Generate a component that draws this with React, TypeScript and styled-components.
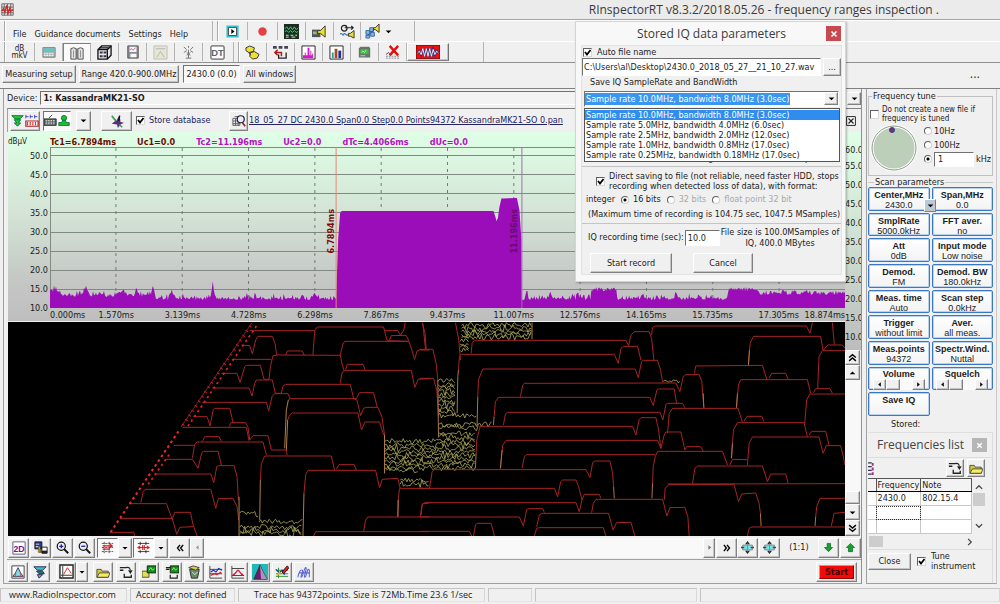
import React from "react";
import styled, { createGlobalStyle, css } from "styled-components";

const UI = `"DejaVu Sans Condensed", "DejaVu Sans", Tahoma, sans-serif`;
const CAPTION = `"Open Sans", "Segoe UI", sans-serif`;
const KEYS = `"Liberation Sans", Arial, sans-serif`;

const Global = createGlobalStyle`
  * { box-sizing: border-box; }
  body { margin: 0; background: #f0f0f0; }
  button, input, select { font: inherit; color: inherit; margin: 0; padding: 0; border-radius: 0; }
  fieldset { margin: 0; min-width: 0; }
  svg { display: block; }
`;

/* ---------- bevels ---------- */
const raised = css`
  border: 1px solid;
  border-color: #fff #808080 #808080 #fff;
  box-shadow: inset -1px -1px 0 #c4c4c4;
`;
const sunken = css`
  border: 1px solid;
  border-color: #707070 #fff #fff #707070;
`;

/* ---------- page ---------- */
const Page = styled.div`
  position: relative;
  display: flex;
  flex-direction: column;
  min-height: 100vh;
  background: #f0f0f0;
  color: #1c1c1c;
  font: 9px/11px ${UI};
  overflow: hidden;
`;
const TitleBar = styled.header`
  display: flex;
  align-items: center;
  justify-content: space-between;
  height: 20px;
  padding: 0 61px 0 1px;
  background: #ebebeb;
  border-bottom: 1px solid #a4a4a4;
`;
const AppTitle = styled.h1`
  margin: 0;
  font: 12px/18px ${CAPTION};
  color: #3a3a3a;
`;
const BarRow = styled.div`
  display: flex;
  align-items: stretch;
  gap: 4px;
  height: 21px;
  padding-left: 4px;
  border-top: 1px solid #fff;
`;
const BarGroup = styled.div<{ $w?: number }>`
  display: flex;
  align-items: center;
  width: ${(p) => (p.$w ? `${p.$w}px` : "auto")};
  border-left: 1px solid #a8a8a8;
  border-right: 1px solid #b4b4b4;
  box-shadow: inset 1px 0 0 #fff;
`;
const MenuItem = styled.button`
  border: 0;
  background: none;
  padding: 5px 0 0;
  margin-left: 8px;
  line-height: 12px;
`;
const ToolCell = styled.button<{ $w?: number; $down?: boolean; $up?: boolean }>`
  display: flex;
  align-items: center;
  justify-content: center;
  gap: 4px;
  width: ${(p) => p.$w ?? 28}px;
  height: 18px;
  background: ${(p) => (p.$down ? "#fafafa" : "none")};
  border: 0;
  border-right: 1px solid #b4b4b4;
  ${(p) => p.$down && "border-top: 1px solid #808080; border-left: 1px solid #808080;"}
  ${(p) => p.$up && raised}
  &:last-child { border-right: ${(p) => (p.$up ? "1px solid #707070" : "0")}; }
`;
const UnitMark = styled.span`
  font-size: 8px;
  line-height: 7px;
  text-align: center;
`;
const TabRow = styled.nav`
  display: flex;
  align-items: flex-start;
  gap: 3px;
  height: 27px;
  padding: 2px 20px 0 2px;
  border-top: 1px solid #909090;
  border-bottom: 1px solid #808080;
`;
const Tab = styled.button<{ $w: number; $down?: boolean }>`
  width: ${(p) => p.$w}px;
  height: 18px;
  margin-left: ${(p) => (p.$down ? 1 : 0)}px;
  background: ${(p) => (p.$down ? "#f8f8f8" : "#ececec")};
  white-space: nowrap;
  ${(p) => (p.$down ? sunken : raised)}
`;
const MoreDots = styled.span`
  margin-left: auto;
  line-height: 18px;
  font-size: 12px;
`;

const Body = styled.div`
  flex: 1;
  display: flex;
  padding-left: 3px;
`;
const Main = styled.main`
  flex: 1;
  min-width: 0;
  display: flex;
  flex-direction: column;
  border-left: 1px solid #a0a0a0;
  border-right: 1px solid #909090;
  border-bottom: 1px solid #a0a0a0;
  padding: 2px 0 0 3px;
`;
const DeviceRow = styled.div`
  display: flex;
  align-items: center;
  gap: 3px;
  height: 14px;
`;
const DeviceField = styled.select`
  flex: 1;
  height: 14px;
  padding-left: 2px;
  appearance: none;
  background: #f3f3f3;
  font-weight: bold;
  ${sunken}
`;
const DropButton = styled.button`
  width: 14px;
  height: 13px;
  display: grid;
  place-items: center;
  background: #f0f0f0;
  ${raised}
`;
const FileRow = styled.div`
  display: flex;
  align-items: center;
  height: 24px;
  margin-top: 3px;
  padding: 1px 5px 1px 2px;
  border-top: 1px solid #808080;
  border-left: 1px solid #a0a0a0;
`;
const Key = styled.button<{ $w?: number; $h?: number; $down?: boolean; $ml?: number }>`
  display: flex;
  align-items: center;
  justify-content: center;
  flex: none;
  gap: 1px;
  width: ${(p) => p.$w ?? 21}px;
  height: ${(p) => p.$h ?? 20}px;
  margin-left: ${(p) => p.$ml ?? 0}px;
  background: ${(p) => (p.$down ? "#fafafa" : "#f0f0f0")};
  ${(p) => (p.$down ? sunken : raised)}
`;
const Check = styled.input.attrs({ type: "checkbox" })`
  appearance: none;
  flex: none;
  width: 9px;
  height: 9px;
  border: 1px solid;
  border-color: #606060 #d8d8d8 #d8d8d8 #606060;
  background: #fff;
  &:checked {
    background: #fff
      url("data:image/svg+xml,%3Csvg xmlns='http://www.w3.org/2000/svg' viewBox='0 0 9 9'%3E%3Cpath d='M2 4l2 2.5L7.500 2' fill='none' stroke='%23000' stroke-width='1.800'/%3E%3C/svg%3E")
      center / 9px 9px no-repeat;
  }
`;
const Radio = styled.input.attrs({ type: "radio" })`
  appearance: none;
  flex: none;
  width: 8px;
  height: 8px;
  border-radius: 50%;
  border: 1px solid;
  border-color: #606060 #d0d0d0 #d0d0d0 #606060;
  background: #fff;
  &:checked { background: radial-gradient(circle, #000 0 1px, #fff 2px); }
`;
const StoreLabel = styled.label`
  display: flex;
  align-items: center;
  gap: 4px;
  margin-left: 4px;
  width: 93px;
  color: #23235e;
  white-space: nowrap;
`;
const FileLink = styled.a`
  flex: 1;
  margin-left: 1px;
  color: #23235e;
  text-decoration: underline;
  white-space: nowrap;
`;

const Graphs = styled.div`
  display: flex;
  margin-left: 1px;
`;
const GraphColumn = styled.div`
  flex: 1;
  min-width: 0;
`;
const Spectrum = styled.section`
  display: flex;
  flex-direction: column;
  height: 189px;
  background: linear-gradient(#dfffe6, #d3e2d5 45%, #c4c6c4 80%, #bebebe);
`;
const Readouts = styled.div`
  display: flex;
  gap: 21px;
  height: 15px;
  line-height: 20px;
  font-weight: bold;
  color: #6a0f00;
`;
const ScaleUnit = styled.span`
  width: 21px;
  font-size: 8px;
  font-weight: normal;
  color: #222;
`;
const Readout = styled.span<{ $second?: boolean }>`
  color: ${(p) => (p.$second ? "#b80fc4" : "#6a0f00")};
`;
const PlotRow = styled.div`
  display: flex;
`;
const LevelScale = styled.div`
  display: flex;
  flex-direction: column;
  width: 42px;
  height: 171px;
  padding-right: 2px;
  & > span {
    flex: 1;
    display: flex;
    align-items: center;
    justify-content: flex-end;
  }
`;
const PlotArea = styled.div`
  position: relative;
  flex: 1;
  min-width: 0;
`;
const TimeScale = styled.div`
  display: flex;
  margin: -9px 0 0 42px;
  line-height: 12px;
`;
const TimeMark = styled.span<{ $edge?: "start" | "end" }>`
  flex: ${(p) => (p.$edge ? 1 : 2)} 1 0;
  min-width: 0;
  display: flex;
  justify-content: ${(p) => (p.$edge === "start" ? "flex-start" : p.$edge === "end" ? "flex-end" : "center")};
  white-space: nowrap;
`;
const CursorTag = styled.span<{ $color: string; $at: string }>`
  position: absolute;
  left: ${(p) => p.$at};
  top: 62px;
  writing-mode: vertical-rl;
  transform: translateX(-100%) rotate(180deg);
  color: ${(p) => p.$color};
  font-weight: bold;
  line-height: 10px;
`;
const Waterfall = styled.section`
  height: 214px;
  margin-top: 1px;
  background: #000;
`;

const SideScale = styled.div`
  display: flex;
  flex-direction: column;
  width: 16px;
`;
const SideLevels = styled.div`
  height: 218px;
  padding-top: 12px;
  overflow: hidden;
  line-height: 19px;
  background: linear-gradient(#dfffe6, #cfe0d2 50%, #bcbcbc);
  & > span { display: block; }
  & > span:first-child { line-height: 13px; }
`;
const Track = styled.div`
  flex: 1;
  display: flex;
  align-items: flex-end;
  background: #f8f8f8;
`;

const Strip = styled.div<{ $line?: boolean }>`
  display: flex;
  align-items: center;
  height: 23px;
  padding-left: 1px;
  ${(p) => p.$line && "border-top: 1px solid #a0a0a0; height: 24px;"}
`;
const StripTrack = styled.div`
  flex: 1;
  height: 20px;
  background: #f9f9f9;
`;
const Ratio = styled.span`
  width: 38px;
  text-align: center;
`;
const StartKey = styled.button`
  margin: 0 4px 0 auto;
  width: 41px;
  height: 20px;
  padding: 2px;
  background: #f0f0f0;
  ${raised}
  & > span {
    display: block;
    background: #f40808;
    border: 1px solid;
    border-color: #ff8080 #900 #900 #ff8080;
    line-height: 12px;
    font-weight: bold;
    color: #400;
  }
`;

/* ---------- right panel ---------- */
const Side = styled.aside`
  width: 131px;
  margin: 0 3px 0 4px;
  padding: 3px 3px 0 1px;
  display: flex;
  flex-direction: column;
  border-left: 1px solid #a0a0a0;
  border-right: 1px solid #c8c8c8;
  border-bottom: 1px solid #a0a0a0;
`;
const TuneBox = styled.fieldset`
  height: 84px;
  padding: 0 0 0 1px;
  border: 1px solid #c0c0c0;
  & > legend { margin-left: 2px; padding: 0 1px; line-height: 9px; }
`;
const TuneNote = styled.label`
  display: flex;
  align-items: center;
  gap: 3px;
  margin-top: 4px;
  font-size: 8px;
  line-height: 9px;
`;
const TuneRow = styled.div`
  display: flex;
  gap: 6px;
  margin-top: 1px;
`;
const StepList = styled.div`
  display: flex;
  flex-direction: column;
  & > label, & > div { display: flex; align-items: center; gap: 2px; height: 14px; }
`;
const StepInput = styled.input`
  width: 40px;
  height: 15px;
  padding-left: 3px;
  background: #fff;
  ${sunken}
`;
const ScanBox = styled.fieldset`
  padding: 0;
  border: 0;
  border-top: 1px solid #c8c8c8;
  margin-top: 1px;
  & > legend { margin-left: 6px; padding: 0 1px; line-height: 10px; }
`;
const ScanGrid = styled.div`
  position: relative;
  display: grid;
  grid-template-columns: 1fr 1fr;
  grid-template-rows: repeat(9, minmax(0, 1fr));
  gap: 2px;
  height: 229px;
  font-family: ${KEYS};
`;
const ScanKey = styled.button`
  display: flex;
  flex-direction: column;
  align-items: center;
  min-width: 0;
  min-height: 0;
  border: 1px solid #3a78c4;
  border-radius: 2px;
  box-shadow: inset 0 0 0 1px #b8d2f0;
  background: linear-gradient(#fff, #f3f3f3);
  line-height: 10px;
  padding: 2px 0 0;
  white-space: nowrap;
`;
const ScanSlider = styled(ScanKey).attrs({ as: "div" })`
  padding: 1px 0 0;
`;
const MiniBar = styled.div`
  display: flex;
  width: 52px;
  height: 11px;
  background: #fafafa;
`;
const MiniKey = styled.button<{ $w?: number; $push?: boolean }>`
  display: grid;
  place-items: center;
  width: ${(p) => p.$w ?? 13}px;
  height: 11px;
  margin-left: ${(p) => (p.$push ? "auto" : "0")};
  background: #f0f0f0;
  ${raised}
`;
const GridDrop = styled.button`
  position: absolute;
  left: 56px;
  top: 12px;
  width: 12px;
  height: 13px;
  display: grid;
  place-items: center;
  background: #b9c8da;
  ${raised}
`;
const Stored = styled.p`
  margin: 3px 0 2px 23px;
  line-height: 11px;
`;
const ListWindow = styled.section`
  flex: 1;
  border-top: 1px solid #e0e0e0;
  border-right: 1px solid #dcdcdc;
`;
const ListTitle = styled.div`
  display: flex;
  align-items: center;
  justify-content: space-between;
  height: 24px;
  padding: 0 5px 0 9px;
  & > h2 { margin: 0; font: 12px/20px ${CAPTION}; color: #444; }
`;
const GreyClose = styled.button`
  display: grid;
  place-items: center;
  width: 15px;
  height: 14px;
  border: 0;
  background: #b6b6b6;
`;
const ListTools = styled.div`
  display: flex;
  align-items: center;
  gap: 3px;
  height: 21px;
  padding: 0 7px 0 0;
  border-top: 1px solid #ddd;
`;
const ListBody = styled.div`
  display: flex;
  height: 56px;
  margin-right: 6px;
`;
const FreqTable = styled.table`
  flex: 1;
  table-layout: fixed;
  border-collapse: collapse;
  background: #fff;
  & th, & td {
    height: 13px;
    padding: 0 1px;
    text-align: left;
    font-weight: normal;
    line-height: 11px;
    border-right: 1px solid #c8c8c8;
    border-bottom: 1px solid #c8c8c8;
    overflow: hidden;
    white-space: nowrap;
  }
  & th { background: #f3f3f3; border-top: 1px solid #555; border-right-color: #555; border-bottom: 1px solid #000; }
  & th:first-child { width: 8px; }
  & th:nth-child(2) { width: 43px; }
  & td.focus { outline: 1px dotted #333; outline-offset: -1px; }
`;
const ListScroll = styled.div`
  display: flex;
  flex-direction: column;
  align-items: center;
  width: 14px;
  padding: 4px 1px 0;
  & > i { display: block; width: 12px; height: 13px; margin-top: 1px; background: #cdcdcd; }
  & > svg:last-child { margin-top: auto; margin-bottom: 3px; }
`;
const ListHScroll = styled.div`
  display: flex;
  align-items: center;
  justify-content: space-between;
  height: 15px;
  padding: 0 17px 0 1px;
  & > i { display: block; width: 14px; height: 11px; background: #cdcdcd; }
`;
const ListFoot = styled.div`
  display: flex;
  align-items: center;
  gap: 6px;
  border-top: 1px solid #ddd;
  padding-top: 1px;
  & > label { display: flex; align-items: center; gap: 5px; line-height: 10px; }
`;

/* ---------- status bar ---------- */
const Status = styled.footer`
  display: flex;
  gap: 3px;
  height: 20px;
  padding: 4px 0 2px;
  font: 9px/12px ${CAPTION};
`;
const StatusCell = styled.span<{ $w?: number; $pad?: number }>`
  ${(p) => (p.$w ? `width: ${p.$w}px;` : "flex: 1;")}
  padding-left: ${(p) => p.$pad ?? 0}px;
  border: 1px solid;
  border-color: #c4c4c4 #d8d8d8 #e4e4e4 #c4c4c4;
  white-space: nowrap;
`;

/* ---------- dialog ---------- */
const Dialog = styled.div`
  position: absolute;
  top: 21px;
  right: 154px;
  width: 271px;
  padding: 0 3px 6px 5px;
  background: #f8f8f8;
  border: 1px solid #d4d4d4;
  box-shadow: 1px 1px 2px rgba(0, 0, 0, 0.25);
`;
const DialogTitle = styled.div`
  display: flex;
  align-items: center;
  justify-content: flex-end;
  gap: 40px;
  height: 23px;
  padding-right: 1px;
  & > h2 { margin: 0; font: 12px/18px ${CAPTION}; color: #3a3a3a; }
`;
const RedClose = styled.button`
  display: grid;
  place-items: center;
  width: 15px;
  height: 15px;
  border: 0;
  background: #c64a50;
`;
const DialogBody = styled.div`
  border: 1px solid #e2e2e2;
  background: #f0f0f0;
`;
const Group = styled.div`
  position: relative;
  border-bottom: 1px solid #c4c4c4;
`;
const AutoName = styled.label`
  display: flex;
  align-items: center;
  gap: 5px;
  height: 12px;
  padding-left: 1px;
`;
const PathRow = styled.div`
  display: flex;
  justify-content: space-between;
  height: 18px;
`;
const PathInput = styled.input`
  width: 239px;
  padding-left: 1px;
  background: #fff;
  ${sunken}
`;
const Caption = styled.label`
  display: block;
  padding: 1px 0 0 8px;
  height: 15px;
`;
const Combo = styled.div`
  display: flex;
  width: 255px;
  height: 16px;
  margin-left: 2px;
  background: #fff;
  ${sunken}
  & > select {
    flex: 1;
    appearance: none;
    border: 0;
    padding: 0 1px;
    color: #fff;
    background: linear-gradient(#3a96f0, #3a96f0) 0 1px / 205px 12px no-repeat;
  }
`;
const Options = styled.ul`
  position: absolute;
  left: 2px;
  top: 62px;
  width: 256px;
  margin: 0;
  padding: 1px 0;
  list-style: none;
  border: 1px solid #555;
  background: #fff;
`;
const Option = styled.li<{ $on?: boolean }>`
  padding-left: 1px;
  line-height: 10px;
  white-space: nowrap;
  ${(p) => p.$on && "background: #2f8df0; color: #fff;"}
`;
const HiddenNote = styled.p`
  margin: 46px 0 0;
  height: 13px;
  line-height: 11px;
  text-align: center;
`;
const Direct = styled.label`
  display: flex;
  align-items: center;
  gap: 4px;
  padding: 4px 0 0 14px;
  line-height: 10px;
  white-space: nowrap;
`;
const Bits = styled.div`
  display: flex;
  align-items: center;
  gap: 6px;
  height: 17px;
  padding-left: 4px;
  & > label { display: flex; align-items: center; gap: 4px; white-space: nowrap; }
`;
const Muted = styled.span`
  color: #a8a8a8;
`;
const Limit = styled.p`
  margin: 0;
  height: 15px;
  padding-left: 6px;
  line-height: 12px;
  white-space: nowrap;
`;
const TimeRow = styled.div`
  display: flex;
  align-items: center;
  gap: 1px;
  height: 27px;
  padding-left: 6px;
  white-space: nowrap;
  & > p { margin: 0; line-height: 11px; text-align: center; }
`;
const TimeInput = styled.input`
  width: 35px;
  height: 16px;
  padding-left: 2px;
  background: #fff;
  ${sunken}
`;
const Actions = styled.div`
  display: flex;
  gap: 21px;
  padding: 2px 0 1px 8px;
`;

/* ---------- icons, 16 x 16 grid ---------- */
const art: Record<string, React.ReactNode> = {
  app: (<><path d="M1 1h14v14H1zM1 5h14M1 9h14M1 12h14M4 1v14M8 1v14M12 1v14" stroke="#555" fill="none" /><path d="M1 10l2-3 2 4 2-8 2 9 2-6 1 4 3-2" stroke="#e02020" strokeWidth="1.6" fill="none" /></>),
  play: (<><path d="M1.500 1.500h13v13h-13z" fill="#f4ffff" stroke="#38c8d0" strokeWidth="2" /><path d="M3 3h10v10H3z" fill="#fff" stroke="#222" /><path d="M6.500 5v6l4-3z" fill="#000" /></>),
  rec: <circle cx="8" cy="8" r="4.500" fill="#e84040" />,
  scope: (<><path d="M0 0h16v16H0z" fill="#1c2c20" /><path d="M1 5l2-2 2 3 2-3 2 3 2-3 2 3 2-2M1 8l2-1 2 2 2-2 2 2 2-2 2 2 2-1" stroke="#4ad070" fill="none" /><path d="M2 12h3M7 12h3M12 12h2M2 14h3M8 14h4" stroke="#d8e8d8" /></>),
  speaker: (<><path d="M0 6h9v8H0z" fill="#505850" /><path d="M1 8h4v3H1z" fill="#9ab0a0" /><path d="M6 7h3l5-5v12l-5-4H6z" fill="#f0e020" stroke="#333" /></>),
  waves: (<><circle cx="4.500" cy="4.500" r="3" fill="none" stroke="#222" strokeWidth="1.300" /><path d="M5 4h9M12 2l2 2-2 2" stroke="#222" fill="none" strokeWidth="1.300" /><path d="M0 11c2-3 3 3 4 0s3 3 5 0" stroke="#3a80b0" strokeWidth="1.300" fill="none" /><path d="M9 10h2l4-3v8l-4-2H9z" fill="#e8e030" stroke="#333" /></>),
  net: (<><path d="M1 7h4v4H1zM6 9h4v4H6zM1 12h4v3H1zM5 4h4v4H5z" fill="#80b8e0" stroke="#3868a0" /><path d="M3 12l9-8" stroke="#2c50a0" fill="none" /><path d="M9 4h2l4-4v9l-4-3H9z" fill="#f0e030" stroke="#333" /></>),
  calc: (<><path d="M1 3h14v11H1z" fill="#b0b8b8" stroke="#707878" /><path d="M2 4h12v4H2z" fill="#58c8c8" /><path d="M2 10h12M2 12h12" stroke="#fff" strokeDasharray="2 1" /></>),
  gate: (<><path d="M1 15V3l3-1 3 1v12zM9 15V3l3-1 3 1v12z" stroke="#444" fill="#e4e4e4" /><path d="M4 5v8M12 5v8" stroke="#888" /><path d="M7 3h2v12H7z" fill="#777" /></>),
  cube: (<><path d="M1 5l4-4h10v10l-4 4H1z" fill="#e8e8f0" stroke="#111" strokeWidth="1.400" /><path d="M1 5h10v10M11 5l4-4M3 3h10" stroke="#111" fill="none" strokeWidth="1.400" /><path d="M3 7h3v2H3zM7 7h3v2H7zM3 11h3v2H3zM7 11h3v2H7z" fill="#334" /></>),
  save: (<><path d="M2 1h12v14H2z" fill="#888c90" stroke="#555" /><path d="M4 2h8v6H4z" fill="#f4f4f4" /><path d="M4 6l2-2 2 2 3-3" stroke="#d040b0" fill="none" /><path d="M5 10h7v4H5z" fill="#f8f8f8" /></>),
  ghost: (<><path d="M1 1h14v14H1z" fill="#e6e6d8" stroke="#c0c0b4" /><path d="M3 4h10M4 13l4-6 4 6" stroke="#b4b4a8" fill="none" /></>),
  mast: (<><path d="M8 5v9M3 2l3 3M13 2l-3 3M3 8l3-2M13 8l-3-2M8 1v2M5 14h6M6 11l4-3M10 11L6 8" stroke="#707070" fill="none" /></>),
  dt: (<><rect x="1" y="1" width="14" height="14" rx="1" fill="#fff" stroke="#333" /><text x="8" y="12" fontSize="10" textAnchor="middle" fontFamily="Liberation Sans, sans-serif" fontWeight="bold" fill="#567">DT</text></>),
  tags: (<><path d="M1 3l4-2 5 2-1 4-5 1-3-2zM6 8l4-1 5 3-2 4-5 1-3-3z" fill="#f0e030" stroke="#333" /><path d="M4 8l2 3" stroke="#333" /></>),
  arrowback: (<><path d="M0 1h4v3H0zM6 1h4v3H6zM12 1h4v3h-4z" fill="#445" /><path d="M2 8h7v4M5 5L2 8l3 3" stroke="#b01818" strokeWidth="1.600" fill="none" /><path d="M6 10v4h8V8" stroke="#222" strokeWidth="1.400" fill="none" /></>),
  spec: (<><path d="M1 1h14v14H1z" fill="#fff" stroke="#222" /><path d="M2 14v-3h2V8h1v3h2V3h2v8h1V6h1v5h1V9h1v5z" fill="#d818c8" /></>),
  bars: (<><path d="M1 1h14v14H1z" fill="#fff" stroke="#222" /><path d="M3 8h2v6H3z" fill="#28a0a0" /><path d="M6 4h3v10H6z" fill="#a05020" /><path d="M10 6h3v8h-3z" fill="#282890" /></>),
  device: (<><path d="M1 3l2-2h11l1 2v11H1z" fill="#6a726a" /><path d="M3 4h10v6H3z" fill="#38c040" /><path d="M3 12h6" stroke="#ddd" /><path d="M4 8l2-2 2 2 2-3" stroke="#c8ffc8" fill="none" /></>),
  cross: (<><path d="M1 12h14M1 14h14" stroke="#888" strokeDasharray="2 1" /><path d="M1 10l3-2 2 2" stroke="#446" fill="none" /><path d="M5 1l9 10M14 1L5 11" stroke="#e01010" strokeWidth="2.600" /></>),
  burst: (<><path d="M0 0h28v16H0z" fill="#ee1010" stroke="#400" /><path d="M2 9l2-2 2 4 2-7 2 9 2-9 2 9 2-9 2 9 2-8 2 6 2-4 2 2" stroke="#303080" strokeWidth="2.500" fill="none" /><path d="M2 9l2-2 2 4 2-7 2 9 2-9 2 9 2-9 2 9 2-8 2 6 2-4 2 2" stroke="#fff" fill="none" /></>),
  plane: (<><path d="M1 3l6 5 4-7 1 8 4 1-4 2-3 4-1-4-6-1 4-3z" fill="#5c2a80" /><path d="M2 2l5 6M10 12l4 3" stroke="#28a040" strokeWidth="1.600" /><path d="M11 2l-1 6" stroke="#111" strokeWidth="1.600" /></>),
  search: (<><path d="M1 5h8v8H1zM3 3h8M1 8h8M1 11h8M4 5v8M7 5v8" stroke="#555" fill="none" /><circle cx="10" cy="6" r="4" fill="#eef" stroke="#223" strokeWidth="1.400" /><path d="M12 10l3 4" stroke="#a02020" strokeWidth="2" /></>),
  d2: (<><path d="M1 1h14v14H1z" fill="#fff" stroke="#557" /><text x="8" y="12" fontSize="10" textAnchor="middle" fontFamily="Liberation Sans, sans-serif" fontWeight="bold" fill="#7a1090">2D</text></>),
  layers: (<><path d="M1 1h8v8H1z" fill="#2838a0" stroke="#111" /><path d="M2 3h4v1H2zM2 6h3v1H2z" fill="#fff" /><path d="M5 6h2v7H5zM7 9h2v4H7z" fill="#e8c820" stroke="#111" strokeWidth="0.500" /><path d="M9 7h6v7H9z" fill="#fff" stroke="#111" /><path d="M9 11h6v3H9z" fill="#222" /></>),
  zin: (<><circle cx="6.500" cy="6.500" r="5" fill="#eef" stroke="#111" strokeWidth="1.500" /><path d="M4 6.500h5M6.500 4v5" stroke="#2020a0" strokeWidth="1.600" /><path d="M10 10l5 5" stroke="#111" strokeWidth="2.400" /></>),
  zout: (<><circle cx="6.500" cy="6.500" r="5" fill="#eef" stroke="#111" strokeWidth="1.500" /><path d="M4 6.500h5" stroke="#2020a0" strokeWidth="1.600" /><path d="M10 10l5 5" stroke="#111" strokeWidth="2.400" /></>),
  marks: (<><path d="M1 3h14M1 8h14M1 13h14M4 1v14M10 1v14" stroke="#444" strokeDasharray="3 1" fill="none" /><path d="M2 6h11M2 10h9M10 3l4 3-4 3" stroke="#d02020" strokeWidth="1.400" fill="none" /></>),
  marks2: (<><path d="M1 3h14M1 13h14M4 1v4M11 1v4M4 11v4M11 11v4" stroke="#222" fill="none" /><path d="M1 8h14M4 6L1 8l3 2M12 6l3 2-3 2M7 5v6M9 5v6" stroke="#d02020" strokeWidth="1.300" fill="none" /></>),
  ll: <path d="M8 3L4 8l4 5M13 3L9 8l4 5" stroke="#000" strokeWidth="2.200" fill="none" />,
  rr: <path d="M3 3l4 5-4 5M8 3l4 5-4 5" stroke="#000" strokeWidth="2.200" fill="none" />,
  l: <path d="M10 4v8L5 8z" fill="#999" />,
  r: <path d="M6 4v8l5-4z" fill="#777" />,
  down: <path d="M3 6h10l-5 5z" fill="#000" />,
  up: <path d="M3 11h10L8 6z" fill="#000" />,
  left: <path d="M11 3v10L5 8z" fill="#000" />,
  right: <path d="M5 3v10l6-5z" fill="#000" />,
  uu: <path d="M2 8l6-5 6 5M2 14l6-5 6 5" stroke="#000" strokeWidth="2.600" fill="none" />,
  dd: <path d="M2 2l6 5 6-5M2 8l6 5 6-5" stroke="#000" strokeWidth="2.600" fill="none" />,
  cup: <path d="M3 11l5-5 5 5" stroke="#444" strokeWidth="2" fill="none" />,
  cdown: <path d="M3 5l5 5 5-5" stroke="#444" strokeWidth="2" fill="none" />,
  cright: <path d="M5 3l5 5-5 5" stroke="#444" strokeWidth="2" fill="none" />,
  fit: (<><path d="M2 5h12v6H2z" fill="#70e4e8" stroke="#688" /><path d="M8 0l3 4H5zM8 16l3-4H5z" fill="#222" /><path d="M8 3v10" stroke="#4aa" strokeWidth="1.200" /><path d="M0 8h4M12 8h4" stroke="#a02020" strokeWidth="1.800" /></>),
  gdown: <path d="M6 2h5v6h3l-6 6-6-6h4z" fill="#18a028" stroke="#063" />,
  gup: <path d="M5 14h6V8h3L8 2 2 8h3z" fill="#18a028" stroke="#063" />,
  peak: (<><path d="M1 1h14v14H1z" fill="#fff" stroke="#333" /><path d="M2 13l3-4 3-6 3 6 3 4z" fill="#80d8e0" stroke="#335" /><path d="M5 9v5M11 9v5" stroke="#d04040" /></>),
  funnel: (<><path d="M1 2h14l-4 4H5z" fill="#40c0c8" stroke="#224" /><path d="M4 7h7l2 3H7z" fill="#207880" stroke="#224" /><path d="M5 11h6l-4 4z" fill="#40c0c8" stroke="#224" /></>),
  graph: (<><path d="M1 1h14v14H1z" fill="#fff" stroke="#222" strokeWidth="1.500" /><path d="M4 2v12M2 12h12" stroke="#333" /><path d="M5 11l4-7 4 6" stroke="#d02020" fill="none" /></>),
  folder: (<><path d="M1 5h5l1 2h7v7H1z" fill="#d8c838" stroke="#444" /><path d="M4 9h12l-2 5H1z" fill="#f4ee60" stroke="#444" /></>),
  export: (<><path d="M1 3h7M1 6h4" stroke="#222" strokeWidth="1.600" fill="none" /><path d="M8 3c4-1 5 1 5 5M11 6l2 3 2-3" stroke="#222" strokeWidth="1.300" fill="none" /><path d="M6 10v4h8v-3" stroke="#222" strokeWidth="1.500" fill="none" /></>),
  folderscr: (<><path d="M0 7h8v7H0z" fill="#e8dc48" stroke="#444" /><path d="M6 1h10v8H6z" fill="#109020" stroke="#111" /><path d="M8 6l2-3 2 3 2-2" stroke="#a8ff60" fill="none" /></>),
  savescr: (<><path d="M1 3h5M1 5h4" stroke="#222" strokeWidth="1.500" /><path d="M6 1h10v8H6z" fill="#109020" stroke="#111" /><path d="M8 6l2-3 2 3 2-2" stroke="#a8ff60" fill="none" /><path d="M6 11v4h8v-4" stroke="#222" strokeWidth="1.400" fill="none" /></>),
  bin: (<><path d="M3 5h11l-2 10H5z" fill="#708868" stroke="#223" /><path d="M2 3l5-2 7 2-4 3z" fill="#d8d040" stroke="#333" /><path d="M6 8l3 3 3-3" stroke="#cfe" fill="none" /></>),
  lines: (<><path d="M1 1v14h14M1 5h14M1 10h14" stroke="#333" fill="none" /><path d="M2 8l3-2 3 2 3-4 4 2" stroke="#2030c0" strokeWidth="1.400" fill="none" /><path d="M2 12l4-2 3 1 5-3" stroke="#d02020" strokeWidth="1.400" fill="none" /></>),
  bell: (<><path d="M1 1v14h14M1 4h14M1 12h14" stroke="#333" fill="none" /><path d="M2 11c4 0 4-5 6-5s2 5 6 5" stroke="#d02040" strokeWidth="1.500" fill="none" /></>),
  mount: (<><path d="M0 0h16v16H0z" fill="#20b8b8" /><path d="M2 15L6 6l2-5 3 7 4 7z" fill="#701878" stroke="#333" /><path d="M8 1l3 7 4 7H9z" fill="#b090b8" /></>),
  pen: (<><path d="M1 6h14M1 10h14M1 13h14M4 3v12" stroke="#228822" fill="none" /><path d="M1 5l4 4 3-3 3 5" stroke="#2030c0" strokeWidth="1.500" fill="none" /><path d="M8 8l6-7 2 2-6 7z" fill="#d82020" stroke="#300" /><path d="M2 12l4-4" stroke="#d8c020" strokeWidth="2" /></>),
  scrib: <path d="M1 14c1-6 3-9 5-8s-3 8-1 8 3-11 5-11-3 11-1 11 2-9 4-9 1 6 1 9M2 9h12" stroke="#5868d0" strokeWidth="1.200" fill="none" />,
  feed: (<><path d="M1 2h14l-4 4H5z" fill="#20c838" stroke="#063" /><path d="M4 7h8l-3 4h3l-4 4-4-4h3z" fill="#20c838" stroke="#063" /></>),
  feed2: (<><path d="M1 3h3M6 3h3M11 3h3M1 1v4M6 1v4M11 1v4" stroke="#3838c0" /><path d="M1 8h14v6H1z" fill="#fff" stroke="#b02020" strokeWidth="1.400" /><path d="M3 9v4M6 9v4M9 9v4M12 9v4" stroke="#d03030" strokeWidth="1.300" /></>),
  keys: (<><path d="M0 6h15v8H0z" fill="#606460" stroke="#222" /><path d="M2 8h11M2 10h11M2 12h11" stroke="#e8e8e8" strokeDasharray="2 1" /><path d="M6 5l4-4" stroke="#222" /></>),
  tower: (<><circle cx="8" cy="4" r="3.500" fill="#18c030" stroke="#063" /><path d="M6 7h4l1 3h4v4H1v-4h4z" fill="#18c030" stroke="#063" /></>),
  boxx: (<><path d="M1 1h14v14H1z" fill="#fff" stroke="#222" strokeWidth="1.600" /><path d="M4 4l8 8M12 4l-8 8" stroke="#222" strokeWidth="2" /></>),
  xwhite: <path d="M4 4l8 8M12 4l-8 8" stroke="#fff" strokeWidth="2.400" />,
  dotsq: (<><path d="M0 2h4M0 6h4M0 10h4M0 14h4" stroke="#335" strokeWidth="1.500" /><path d="M5 2v3M5 7v3M5 12v3" stroke="#a03080" strokeWidth="2" /></>),
};
const Icon = ({ n, s = 14, w }: { n: string; s?: number; w?: number }) => (
  <svg width={w ?? s} height={s} viewBox={w ? "0 0 28 16" : "0 0 16 16"} aria-hidden="true">
    {art[n]}
  </svg>
);

/* ---------- signal drawing ---------- */
const rng = (seed: number) => () => {
  seed = (seed * 1664525 + 1013904223) % 4294967296;
  return seed / 4294967296;
};

const envelope = () => {
  const r = rng(7);
  const bumps = [
    [54, 9, 6], [86, 3, 9], [122, 7, 4], [137, 2, 6], [153, 1, 8], [172, 3, 8], [213, 1, 12], [213, 4, 4],
    [315, 2, 6], [527, 1, 7], [551, 2, 7], [643, 1, 4], [677, 1, 6], [700, 2, 4],
  ];
  let d = "M50 308";
  for (let x = 50; x <= 846; x += 1) {
    if (x >= 336 && x <= 522) {
      if (x === 336)
        d += " L336.500 299 L338.500 240 L340.500 213 L342 211 L494 211 L496 217 L497 221 L498.500 218 L500 207 L502 198.500 L517.500 198 L520 210 L522 240 L522.500 300";
      continue;
    }
    let h = (x < 155 ? 11 : 8) + r() * 3;
    if (r() > 0.72) h += r() * 5;
    for (const [c, w, a] of bumps) if (Math.abs(x - c) <= w) h += a * (1 - Math.abs(x - c) / (w + 1));
    if (x > 591 && x < 618) h = 17 + r() * 4;
    if (x > 728) h = 13 + r() * 5 + (x < 760 ? 3 : 0);
    d += ` L${x} ${(308 - h).toFixed(1)}`;
  }
  return d + " L846 308 Z";
};

const LEVELS = [155, 174, 193, 212, 232, 251, 270, 289, 308];
const TIMES = Array.from({ length: 12 }, (_, i) => 116 + i * 66.4).filter((x) => x < 840);

const SpectrumPlot = () => (
  <svg width="100%" height="161" viewBox="50 147 796 161" preserveAspectRatio="none">
    <g stroke="#7f8a82" strokeWidth="1">
      {LEVELS.map((y) => <path key={y} d={`M50 ${y}.500H846`} />)}
      <path d="M50.500 147V308M50 147.500H846" />
    </g>
    {TIMES.map((x) => <path key={x} d={`M${x} 148V308`} stroke="#707a74" strokeDasharray="3 4" />)}
    <path d={envelope()} fill="#9a0db8" />
    <path d="M336.500 147V308" stroke="#e08a70" />
    <path d="M522.500 147V308" stroke="#a070b0" />
  </svg>
);

const leftTraces = [
  "M750 32H945M940 105L943 60 946 30 953 21 1152 21 1158 45 1163 62 1228 64M1155 32L1195 32 1203 45 1213 30 1217 8M1170 60L1175 47 1220 46 1228 62M1268 8L1277 40 1280 90",
  "M1022 105L1030 72 1035 64 1228 64 1237 90 1245 118 1253 93 1260 90 1290 90",
  "M725 75L750 77 758 102 768 60 775 49 818 49 826 70 831 105 1022 106 1028 135 1033 150M858 105L863 93 908 93 914 106",
  "M696 118H815M808 178L812 140 820 107 831 106M1038 148L1043 133 1090 133 1097 150",
  "M1022 190L1027 160 1033 151 1235 151 1246 202 1256 178 1290 175",
  "M665 160L712 160 721 187 735 140 740 136 782 136 793 178 808 178",
  "M638 204L748 204 757 228 765 190 770 180 818 180 827 220 845 220 850 198 857 193 1052 193 1062 235",
  "M608 247L800 247 807 273 817 230 825 221 865 221 872 236 1070 236 1080 218 1122 218 1133 262",
  "M866 240L872 236M864 300L870 285 878 279 1075 279 1086 330 1096 306 1140 306 1152 345",
  "M1062 236L1072 240 1083 287 1092 265 1100 262 1135 262 1147 290 1155 345",
  "M580 290L622 290 631 318 640 270 645 265 690 265 700 307M548 322H740L748 362M688 320L694 308 738 308 745 322 750 360",
  "M522 376H583M578 415L584 375 592 366 790 366 800 405M608 364L615 350 658 350 665 364M750 360L760 347 805 347 815 390 860 390 862 405",
  "M497 418L578 418 595 445 606 398 612 394 655 394 665 436M468 462L633 462 642 488 651 440 657 437 703 437 712 470 716 540",
  "M782 480L785 430 795 408 995 408 1005 450M1010 448L1018 434 1064 434 1070 450M913 520L918 465 925 451 1128 451 1140 503 1148 478 1195 475 1202 505 1290 505",
  "M423 548L430 515 436 508 633 508 648 565 656 536 700 535 712 560 717 600",
  "M388 551L500 551 517 598 525 577 572 577 580 615 592 648M360 595L517 595 531 643 540 622 580 620M330 637L402 637 405 648",
  "M1195 590L1196 540 1200 505M1262 590L1268 552 1290 549M1092 635L1098 600 1105 591 1290 591M942 648L948 635 1290 635",
].join("");

const rightTraces = [
  "M10 40L18 118M0 118L40 118 50 160 55 210M108 38L118 90 123 150M0 205L42 205 52 240 57 320",
  "M155 130L158 100 165 91 620 91 628 107 635 75 645 65 690 65 697 85 704 150",
  "M117 180L120 140 125 133 585 133 597 160 605 115 613 109 655 109 665 150",
  "M697 75L700 52 708 48 1162 48 1173 70 1180 38M1240 38L1246 104M1212 122L1226 105 1270 105 1278 115",
  "M988 165L993 100 1003 79 1205 79 1212 122 1278 122M1196 235L1200 140 1210 122",
  "M175 260L177 210 190 177 648 177 657 203 667 155 672 151 715 151 724 180 730 216",
  "M303 260L310 225 315 220 770 219 782 245 792 200 800 194 840 194 848 215 854 293",
  "M825 190L830 168 1030 166 1043 208M1050 205L1058 190 1100 190 1107 207",
  "M224 320L228 275 237 262 692 262 702 287 713 240 718 237 765 237 772 280",
  "M952 293L958 225 965 209 1165 209 1175 250M1183 248L1190 236 1233 236 1240 250",
  "M252 345L258 312 265 307 722 307 731 330 740 283 745 280 790 280 797 293",
  "M745 370L750 310 760 295 957 295 970 337M975 333L984 319 1028 319 1034 335M1157 340L1163 270 1172 252 1278 252",
  "M170 430L172 390 182 349 640 349 650 375 660 328 665 323 710 323 718 360 725 415 735 375 740 366 785 366 797 420 803 410 845 410 852 423",
  "M937 445L943 360 955 338 1155 338 1165 380M1170 375L1178 364 1220 364 1230 405",
  "M243 475L250 405 260 391 715 391 725 415M985 465L990 400 1000 381 1200 381 1212 430 1222 407 1265 407 1273 440 1278 465",
  "M308 475L315 440 322 434 708 434M700 520L702 470 708 440 715 424 910 424 925 465M932 465L940 448 985 449",
  "M820 522L827 475 835 468 1030 468 1045 515 1055 492 1100 492 1107 520",
  "M30 535L38 485 45 479 500 479 512 503 520 458 528 453 572 453 580 490 583 530",
  "M0 535L405 535 415 560 424 515 430 510 470 510 478 530 488 570 495 553 540 553 545 565",
  "M735 570L738 535 748 524 945 524 958 575 968 552 1010 549 1020 580 1024 610M745 522L1278 521",
  "M517 608L522 580 530 568 730 568 743 618 752 593 797 592 806 620 810 678M5 615L8 585 15 578 470 578 480 605 488 570",
  "M1190 620L1193 590 1203 565 1278 565M1237 648L1245 610 1278 607M0 621L300 621 312 648 322 598 327 596 370 596 375 608",
  "M352 650L360 615 368 610 568 610 581 660 592 638 635 637 647 678M345 678L352 655 360 653 552 653 560 678",
  "M0 664L150 664 157 678M162 678L168 645 173 640 215 640 225 678M985 678L990 655 998 651 1278 651",
].join("");

const noise = (x0: number, y0: number, x1: number, y1: number, pitch: number, seed: number) => {
  const r = rng(seed);
  let d = "";
  for (let y = y0; y <= y1; y += pitch) {
    d += `M${x0} ${y}`;
    for (let x = x0 + 5; x <= x1; x += 5) {
      const dy = (r() - 0.5) * (r() > 0.6 ? 26 : 12);
      d += ` L${x} ${Math.min(Math.max(y + dy, y0 - 8), y1 + 8).toFixed(1)}`;
    }
  }
  return d;
};
const rightNoise = [
  noise(126, 46, 338, 82, 9, 3),
  noise(122, 94, 150, 126, 9, 4),
  noise(56, 214, 110, 312, 10, 5),
  noise(56, 316, 174, 316, 20, 6),
  noise(56, 344, 176, 354, 9, 8),
  noise(176, 343, 220, 343, 9, 9),
  noise(56, 372, 168, 382, 10, 10),
  noise(-104, 394, 168, 474, 10, 11),
  noise(-100, 480, -2, 480, 9, 12),
  noise(-58, 510, 30, 524, 12, 13),
  noise(732, 214, 786, 214, 12, 14),
].join("");
const leftNoise = [noise(720, 580, 778, 586, 8, 15), noise(778, 606, 908, 606, 8, 16), noise(720, 622, 908, 646, 9, 17)].join("");

const WaterfallPlot = () => (
  <svg width="100%" height="214" viewBox="8 322 838 214" preserveAspectRatio="none" fill="none">
    <g transform="translate(0 320) scale(0.33333)" strokeWidth="3">
      <path d={leftNoise} stroke="#a8a456" strokeWidth="2.500" />
      <path d={leftTraces} stroke="#a82424" />
      <path d="M757 8L543 322" stroke="#8a1c1c" strokeWidth="3" />
      <path d="M752 18L548 318" stroke="#d02020" strokeWidth="9" strokeDasharray="3 14" />
      <path d="M770 18L562 322M508 404L440 500" stroke="#e02424" strokeWidth="5" strokeDasharray="7 10" />
      <path d="M536 334L330 640" stroke="#f02828" strokeWidth="6" strokeDasharray="8 9" />
      <path d="M855 385L860 270 866 240M860 390L864 300M780 600L782 480M910 648L913 520M718 530V648M1155 345V460M1195 590L1196 540" stroke="#b08048" />
    </g>
    <g transform="translate(420 310) scale(0.33333)" strokeWidth="3">
      <path d={rightNoise} stroke="#aaa65a" strokeWidth="2.500" />
      <path d={rightTraces} stroke="#a82424" />
      <path d="M113 310L115 200 117 180M173 345L175 260M168 475L170 430M55 210L57 380M243 475L248 420M698 565L700 520M583 530L585 565M1024 610L1026 648M1188 648L1190 620M988 165L991 120M952 293L955 250M937 445L940 400M222 345L224 320M852 250L854 293M338 38V88" stroke="#a87848" />
    </g>
  </svg>
);

const readouts: [string, boolean][] = [
  ["Tc1=6.7894ms", false], ["Uc1=0.0", false], ["Tc2=11.196ms", true], ["Uc2=0.0", true], ["dTc=4.4066ms", true], ["dUc=0.0", true],
];
const levels = ["50.0", "45.0", "40.0", "35.0", "30.0", "25.0", "20.0", "15.0", "10.0"];
const sideLevels = ["60.0", "55.0", ...levels];
const times = ["1.570ms", "3.139ms", "4.728ms", "6.298ms", "7.867ms", "9.437ms", "11.007ms", "12.576ms", "14.165ms", "15.735ms", "17.305ms"];
const scan: [string, string][] = [
  ["Center,MHz", "2430.0"], ["Span,MHz", "0.0"],
  ["SmplRate", "5000.0kHz"], ["FFT aver.", "no"],
  ["Att", "0dB"], ["Input mode", "Low noise"],
  ["Demod.", "FM"], ["Demod. BW", "180.0kHz"],
  ["Meas. time", "Auto"], ["Scan step", "0.0kHz"],
  ["Trigger", "without limit"], ["Aver.", "all meas."],
  ["Meas.points", "94372"], ["Spectr.Wind.", "Nuttal"],
];
const rates = [
  "Sample rate 10.0MHz, bandwidth 8.0MHz (3.0sec)",
  "Sample rate 5.0MHz, bandwidth 4.0MHz (6.0sec)",
  "Sample rate 2.5MHz, bandwidth 2.0MHz (12.0sec)",
  "Sample rate 1.0MHz, bandwidth 0.8MHz (17.0sec)",
  "Sample rate 0.25MHz, bandwidth 0.18MHz (17.0sec)",
];

const SliderKey = ({ name }: { name: string }) => (
  <ScanSlider>
    <b>{name}</b>
    <MiniBar>
      <MiniKey aria-label={`${name} down`}><Icon n="left" s={7} /></MiniKey>
      <MiniKey $w={14} aria-label={`${name} thumb`} />
      <MiniKey $push aria-label={`${name} up`}><Icon n="right" s={7} /></MiniKey>
    </MiniBar>
  </ScanSlider>
);

const IQDialog = () => (
  <Dialog role="dialog" aria-labelledby="iq-title">
    <DialogTitle>
      <h2 id="iq-title">Stored IQ data parameters</h2>
      <RedClose aria-label="Close"><Icon n="xwhite" s={10} /></RedClose>
    </DialogTitle>
    <DialogBody>
      <Group>
        <AutoName><Check defaultChecked />Auto file name</AutoName>
        <PathRow>
          <PathInput aria-label="File" defaultValue="C:\Users\al\Desktop\2430.0_2018_05_27__21_10_27.wav" />
          <Key $w={18} $h={18} aria-label="Browse">...</Key>
        </PathRow>
        <Caption htmlFor="rate">Save IQ SampleRate and BandWidth</Caption>
        <Combo>
          <select id="rate" defaultValue={rates[0]}>
            {rates.map((r) => <option key={r}>{r}</option>)}
          </select>
          <DropButton aria-label="Open list"><Icon n="down" s={9} /></DropButton>
        </Combo>
        <HiddenNote>(Maximum time of recording is 3.0 sec, 30.0 MSamples)</HiddenNote>
        <Options role="listbox" aria-label="Rates">
          {rates.map((r, i) => <Option key={r} role="option" $on={i === 0} aria-selected={i === 0}>{r}</Option>)}
        </Options>
      </Group>
      <Group>
        <Direct>
          <Check defaultChecked />
          <span>Direct saving to file (not reliable, need faster HDD, stops<br />recording when detected loss of data), with format:</span>
        </Direct>
        <Bits>
          <span>integer</span>
          <label><Radio name="bits" defaultChecked />16 bits</label>
          <label><Radio name="bits" disabled /><Muted>32 bits</Muted></label>
          <label><Radio name="bits" disabled /><Muted>float point 32 bit</Muted></label>
        </Bits>
        <Limit>(Maximum time of recording is 104.75 sec, 1047.5 MSamples)</Limit>
      </Group>
      <TimeRow>
        <label htmlFor="rec">IQ recording time (sec):</label>
        <TimeInput id="rec" defaultValue="10.0" />
        <p>File size is 100.0MSamples of<br />IQ, 400.0 MBytes</p>
      </TimeRow>
      <Actions>
        <Key $w={82}>Start record</Key>
        <Key $w={60}>Cancel</Key>
      </Actions>
    </DialogBody>
  </Dialog>
);

export default function App() {
  return (
    <Page>
      <Global />
      <TitleBar>
        <Icon n="app" s={13} />
        <AppTitle>RInspectorRT v8.3.2/2018.05.26 - frequency ranges inspection .</AppTitle>
      </TitleBar>

      <BarRow>
        <BarGroup $w={209}>
          {["File", "Guidance documents", "Settings", "Help"].map((m) => <MenuItem key={m}>{m}</MenuItem>)}
        </BarGroup>
        <BarGroup $w={198}>
          <ToolCell $w={30}><Icon n="play" s={13} /></ToolCell>
          <ToolCell $w={30}><Icon n="rec" s={15} /></ToolCell>
          <ToolCell $w={28}><Icon n="scope" s={15} /></ToolCell>
          <ToolCell $w={28}><Icon n="speaker" s={15} /></ToolCell>
          <ToolCell $w={27}><Icon n="waves" s={15} /></ToolCell>
          <ToolCell $w={36}><Icon n="net" s={15} /><Icon n="down" s={9} /></ToolCell>
        </BarGroup>
      </BarRow>
      <BarRow>
        <BarGroup $w={230}>
          <ToolCell $w={30}><UnitMark>dB<br />mkV</UnitMark></ToolCell>
          <ToolCell><Icon n="calc" /></ToolCell>
          <ToolCell $down><Icon n="gate" /></ToolCell>
          <ToolCell><Icon n="cube" s={15} /></ToolCell>
          <ToolCell><Icon n="save" /></ToolCell>
          <ToolCell><Icon n="ghost" s={15} /></ToolCell>
          <ToolCell><Icon n="mast" s={15} /></ToolCell>
          <ToolCell><Icon n="dt" s={15} /></ToolCell>
        </BarGroup>
        <BarGroup $w={246}>
          <ToolCell><Icon n="tags" s={15} /></ToolCell>
          <ToolCell><Icon n="arrowback" s={15} /></ToolCell>
          <ToolCell><Icon n="spec" s={15} /></ToolCell>
          <ToolCell><Icon n="bars" s={15} /></ToolCell>
          <ToolCell><Icon n="device" s={13} /></ToolCell>
          <ToolCell><Icon n="cross" s={15} /></ToolCell>
          <ToolCell $w={42} $up><Icon n="burst" s={14} w={24} /></ToolCell>
        </BarGroup>
      </BarRow>
      <TabRow>
        <Tab $w={74}>Measuring setup</Tab>
        <Tab $w={100}>Range 420.0-900.0MHz</Tab>
        <Tab $w={57} $down>2430.0 (0.0)</Tab>
        <Tab $w={53}>All windows</Tab>
        <MoreDots>...</MoreDots>
      </TabRow>

      <Body>
        <Main>
          <DeviceRow>
            <label htmlFor="device">Device:</label>
            <DeviceField id="device"><option>1: KassandraMK21-SO</option></DeviceField>
            <DropButton aria-label="Devices"><Icon n="down" s={9} /></DropButton>
          </DeviceRow>
          <FileRow>
            <Key $w={30}><Icon n="feed" s={13} /><Icon n="feed2" s={14} /></Key>
            <Key $w={28} $down $ml={3}><Icon n="keys" s={13} /><Icon n="tower" s={12} /></Key>
            <Key $w={15} $ml={5} aria-label="Modes"><Icon n="down" s={9} /></Key>
            <Key $w={31} $ml={10}><Icon n="plane" s={14} /></Key>
            <StoreLabel><Check defaultChecked />Store database</StoreLabel>
            <Key $w={19} aria-label="Find"><Icon n="search" s={14} /></Key>
            <FileLink href="#trace">18_05_27 DC 2430.0 Span0.0 Step0.0 Points94372 KassandraMK21-SO 0.pan</FileLink>
            <Icon n="boxx" s={10} />
          </FileRow>

          <Graphs>
            <GraphColumn>
              <Spectrum>
                <Readouts>
                  <ScaleUnit>dBµV</ScaleUnit>
                  {readouts.map(([t, s]) => <Readout key={t} $second={s}>{t}</Readout>)}
                </Readouts>
                <PlotRow>
                  <LevelScale>{levels.map((l) => <span key={l}>{l}</span>)}</LevelScale>
                  <PlotArea>
                    <SpectrumPlot />
                    <CursorTag $color="#7a0c10" $at="36%">6.7894ms</CursorTag>
                    <CursorTag $color="#6a0a70" $at="59%">11.196ms</CursorTag>
                  </PlotArea>
                </PlotRow>
                <TimeScale>
                  <TimeMark $edge="start">0.000ms</TimeMark>
                  {times.map((t) => <TimeMark key={t}>{t}</TimeMark>)}
                  <TimeMark $edge="end">18.874ms</TimeMark>
                </TimeScale>
              </Spectrum>
              <Waterfall><WaterfallPlot /></Waterfall>
            </GraphColumn>
            <SideScale>
              <SideLevels>{sideLevels.map((l) => <span key={l}>{l}</span>)}</SideLevels>
              <Key $w={15} $h={15} aria-label="Top"><Icon n="uu" s={9} /></Key>
              <Key $w={15} $h={15} aria-label="Up"><Icon n="up" s={9} /></Key>
              <Track><Key $w={15} $h={13} aria-label="Thumb" /></Track>
              <Key $w={15} $h={16} aria-label="Down"><Icon n="down" s={9} /></Key>
              <Key $w={15} $h={16} aria-label="Bottom"><Icon n="dd" s={9} /></Key>
            </SideScale>
          </Graphs>

          <Strip>
            <Key><Icon n="d2" /></Key>
            <Key $ml={1}><Icon n="layers" /></Key>
            <Key $ml={1}><Icon n="zin" s={13} /></Key>
            <Key $ml={1}><Icon n="zout" s={13} /></Key>
            <Key $ml={2} $down><Icon n="marks" s={13} /></Key>
            <Key $w={14}><Icon n="down" s={8} /></Key>
            <Key $ml={1} $down><Icon n="marks2" s={13} /></Key>
            <Key $w={14}><Icon n="down" s={8} /></Key>
            <Key $ml={1}><Icon n="ll" s={10} /></Key>
            <Key $w={14}><Icon n="l" s={9} /></Key>
            <StripTrack />
            <Key $w={12}><Icon n="r" s={9} /></Key>
            <Key $ml={1}><Icon n="rr" s={10} /></Key>
            <Key><Icon n="fit" s={13} /></Key>
            <Key $ml={1}><Icon n="fit" s={13} /></Key>
            <Ratio>(1:1)</Ratio>
            <Key><Icon n="gdown" s={11} /></Key>
            <Key $ml={1}><Icon n="gup" s={11} /></Key>
          </Strip>
          <Strip $line>
            <Key $w={20}><Icon n="peak" /></Key>
            <Key $w={20} $ml={2}><Icon n="funnel" /></Key>
            <Key $w={20} $ml={6}><Icon n="graph" s={15} /></Key>
            <Key $w={12}><Icon n="down" s={8} /></Key>
            {["folder", "export", "folderscr", "savescr", "bin", "lines", "bell", "mount", "pen", "scrib"].map((n, i) => (
              <Key key={n} $w={20} $ml={i === 0 ? 5 : i < 4 ? 3 : 2} aria-label={n}><Icon n={n} s={n === "mount" ? 16 : 14} /></Key>
            ))}
            <StartKey><span>Start</span></StartKey>
          </Strip>
        </Main>

        <Side>
          <TuneBox>
            <legend>Frequency tune</legend>
            <TuneNote><Check /><span>Do not create a new file if<br />frequency is tuned</span></TuneNote>
            <TuneRow>
              <svg width="48" height="48" viewBox="0 0 48 48" aria-hidden="true">
                <circle cx="24" cy="24" r="22" fill="#bccfb8" stroke="#fff" strokeWidth="3" />
                <circle cx="24" cy="24" r="22" fill="none" stroke="#8c988a" strokeWidth="1" />
                <circle cx="22" cy="6" r="2.500" fill="#803060" stroke="#3040a0" />
              </svg>
              <StepList>
                <label><Radio name="step" />10Hz</label>
                <label><Radio name="step" />100Hz</label>
                <div><Radio name="step" defaultChecked aria-label="Custom step" /><StepInput aria-label="Step" defaultValue="1" />kHz</div>
              </StepList>
            </TuneRow>
          </TuneBox>
          <ScanBox>
            <legend>Scan parameters</legend>
            <ScanGrid>
              {scan.map(([k, v]) => <ScanKey key={k}><b>{k}</b><span>{v}</span></ScanKey>)}
              <SliderKey name="Volume" />
              <SliderKey name="Squelch" />
              <ScanKey><b>Save IQ</b></ScanKey>
              <GridDrop aria-label="Center list"><Icon n="down" s={9} /></GridDrop>
            </ScanGrid>
          </ScanBox>
          <Stored>Stored:</Stored>
          <ListWindow>
            <ListTitle>
              <h2>Frequencies list</h2>
              <GreyClose aria-label="Close list"><Icon n="xwhite" s={9} /></GreyClose>
            </ListTitle>
            <ListTools>
              <Icon n="dotsq" s={15} />
              <Key $w={18} $h={18} $ml={60}><Icon n="export" s={14} /></Key>
              <Key $w={18} $h={18}><Icon n="folder" s={14} /></Key>
            </ListTools>
            <ListBody>
              <FreqTable>
                <thead><tr><th /><th>Frequency</th><th>Note</th></tr></thead>
                <tbody>
                  <tr><td /><td>2430.0</td><td>802.15.4</td></tr>
                  <tr><td /><td className="focus" /><td /></tr>
                  <tr><td /><td /><td /></tr>
                </tbody>
              </FreqTable>
              <ListScroll><Icon n="cup" s={10} /><i /><Icon n="cdown" s={10} /></ListScroll>
            </ListBody>
            <ListHScroll><i /><Icon n="cright" s={10} /></ListHScroll>
            <ListFoot>
              <Key $w={43} $h={17}>Close</Key>
              <label><Check defaultChecked /><span>Tune<br />instrument</span></label>
            </ListFoot>
          </ListWindow>
        </Side>
      </Body>

      <Status>
        <StatusCell $w={127} $pad={8}>www.RadioInspector.com</StatusCell>
        <StatusCell $w={105} $pad={5}>Accuracy: not defined</StatusCell>
        <StatusCell $w={247} $pad={15}>Trace has 94372points. Size is 72Mb.Time 23.6 1/sec</StatusCell>
        <StatusCell $w={44} />
        <StatusCell $w={162} />
        <StatusCell />
      </Status>

      <IQDialog />
    </Page>
  );
}
